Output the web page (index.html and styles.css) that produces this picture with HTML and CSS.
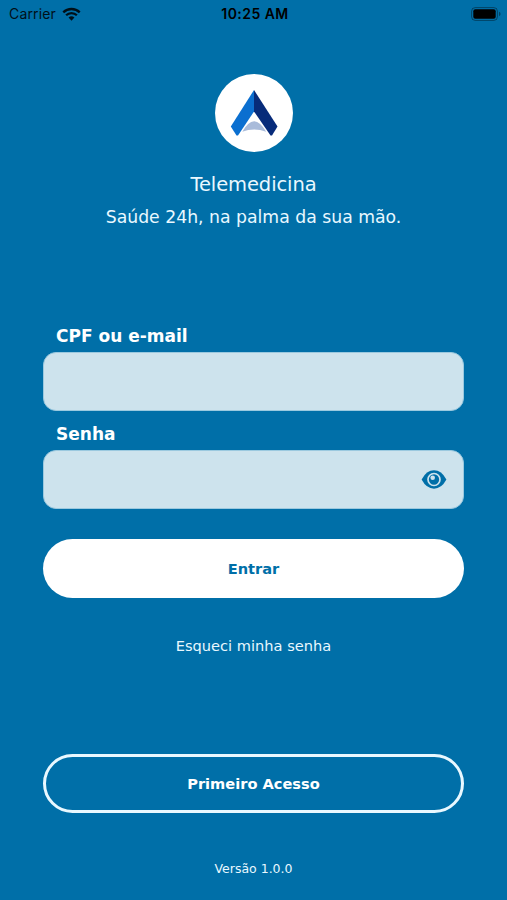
FILE: index.html
```html
<!DOCTYPE html>
<html lang="pt-BR">
<head>
  <meta charset="UTF-8">
  <meta name="viewport" content="width=device-width, initial-scale=1.0">
  <title>Telemedicina</title>
  <link rel="stylesheet" href="styles.css">
</head>
<body>
  <div class="status-bar">
    <div class="carrier">
      <span>Carrier</span>
      <svg class="wifi" viewBox="0 0 18 13" width="19" height="14">
        <path d="M1.2 4.9a11.2 11.2 0 0 1 15.6 0M3.9 7.7a7.3 7.3 0 0 1 10.2 0" fill="none" stroke="#000" stroke-width="2.2"/>
        <path d="M6.2 9.900a4.200 4.200 0 0 1 5.600 0L9 12.900z"/>
      </svg>
    </div>
    <span class="clock">10:25 AM</span>
    <svg class="battery" viewBox="0 0 30 14" width="30" height="14">
      <rect x="0.6" y="0.6" width="25.8" height="12.8" rx="3.6" fill="none" stroke="#000" stroke-opacity="0.4"/>
      <rect x="2.3" y="2.3" width="22.4" height="9.4" rx="2"/>
      <path d="M28 4.8v4.4q1.6-.6 1.6-2.2T28 4.8z" fill-opacity="0.4"/>
    </svg>
  </div>

  <main class="login">
    <header class="brand">
      <div class="logo">
        <svg viewBox="0 0 78 78" width="78" height="78">
          <path d="M39 16L15.800 52.500L21.500 61.500H23L39 37.500z" fill="#0b6fd0"/>
          <path d="M39 16L62.500 52.500L57 61.500H55.500L39 37.500z" fill="#072b7a"/>
          <path d="M27.300 57.800Q39 36.500 51.200 57.800Q39 53 27.300 57.800z" fill="#a9bbda"/>
        </svg>
      </div>
      <h1>Telemedicina</h1>
      <p>Saúde 24h, na palma da sua mão.</p>
    </header>

    <form class="login-form">
      <label for="user">CPF ou e-mail</label>
      <div class="field">
        <input id="user" type="text">
      </div>
      <label for="password">Senha</label>
      <div class="field">
        <input id="password" type="password">
        <svg class="eye" viewBox="0 0 26 20" width="26" height="20">
          <path d="M.6 9.500Q5.500 .3 13 .3T25.400 9.500Q20.500 18.700 13 18.700T.6 9.500z" fill="#006fa8"/>
          <circle cx="13" cy="9.500" r="6" fill="#006fa8" stroke="#cde3ed" stroke-width="1.700"/>
          <circle cx="11.700" cy="7.800" r="2.300" fill="#cde3ed"/>
        </svg>
      </div>
      <button type="button" class="btn btn-primary">Entrar</button>
    </form>

    <a class="forgot">Esqueci minha senha</a>
    <button type="button" class="btn btn-outline">Primeiro Acesso</button>
    <p class="version">Versão 1.0.0</p>
  </main>
</body>
</html>
```

FILE: styles.css
```css
* {
  box-sizing: border-box;
}
body {
  margin: 0;
  height: 900px;
  overflow: hidden;
  background-color: #006fa8;
  color: #e9f8ff;
  font-family: Verdana, "DejaVu Sans", sans-serif;
}
.status-bar {
  display: grid;
  grid-template-columns: 1fr auto 1fr;
  align-items: center;
  height: 27px;
  padding: 0 6px 0 9px;
  color: #000;
  font-family: Inter, sans-serif;
  font-size: 14px;
}
.carrier {
  display: flex;
  align-items: center;
  gap: 6px;
  letter-spacing: 0.15px;
  opacity: 0.85;
}
.clock {
  font-weight: 600;
  letter-spacing: 0.45px;
}
.battery {
  justify-self: end;
}
.login {
  display: flex;
  flex-direction: column;
  padding: 47px 43px 0;
}
.brand {
  display: flex;
  flex-direction: column;
  align-items: center;
}
.logo {
  width: 78px;
  height: 78px;
  border-radius: 50%;
  background-color: #fff;
}
.brand h1 {
  margin: 20px 0 0;
  font-size: 19.5px;
  font-weight: normal;
  letter-spacing: -0.1px;
  line-height: 25px;
}
.brand p {
  margin: 8px 0 0;
  font-size: 17.25px;
  line-height: 24px;
}
.login-form {
  display: flex;
  flex-direction: column;
  margin-top: 95px;
}
.login-form label {
  height: 28px;
  padding-left: 13px;
  color: #fff;
  font-size: 17px;
  font-weight: bold;
  line-height: 24px;
}
.field {
  display: flex;
  align-items: center;
  height: 59px;
  margin-bottom: 11px;
  padding: 0 16px 0 18px;
  border: 1px solid #9bc9df;
  border-radius: 13px;
  background-color: #cde3ed;
}
.field input {
  flex: 1;
  min-width: 0;
  border: none;
  outline: none;
  background: transparent;
  font: inherit;
}
.btn {
  width: 100%;
  height: 59px;
  border: none;
  border-radius: 30px;
  font-family: inherit;
  font-size: 14.6px;
  font-weight: bold;
}
.btn-primary {
  margin-top: 19px;
  background-color: #fff;
  color: #006fa8;
}
.forgot {
  margin-top: 38px;
  font-size: 14.6px;
  line-height: 20px;
  text-align: center;
}
.btn-outline {
  margin-top: 98px;
  border: 3px solid #e9f8ff;
  background-color: transparent;
  color: #fff;
}
.version {
  margin: 47px 0 0;
  font-size: 12.5px;
  line-height: 18px;
  text-align: center;
}
```
